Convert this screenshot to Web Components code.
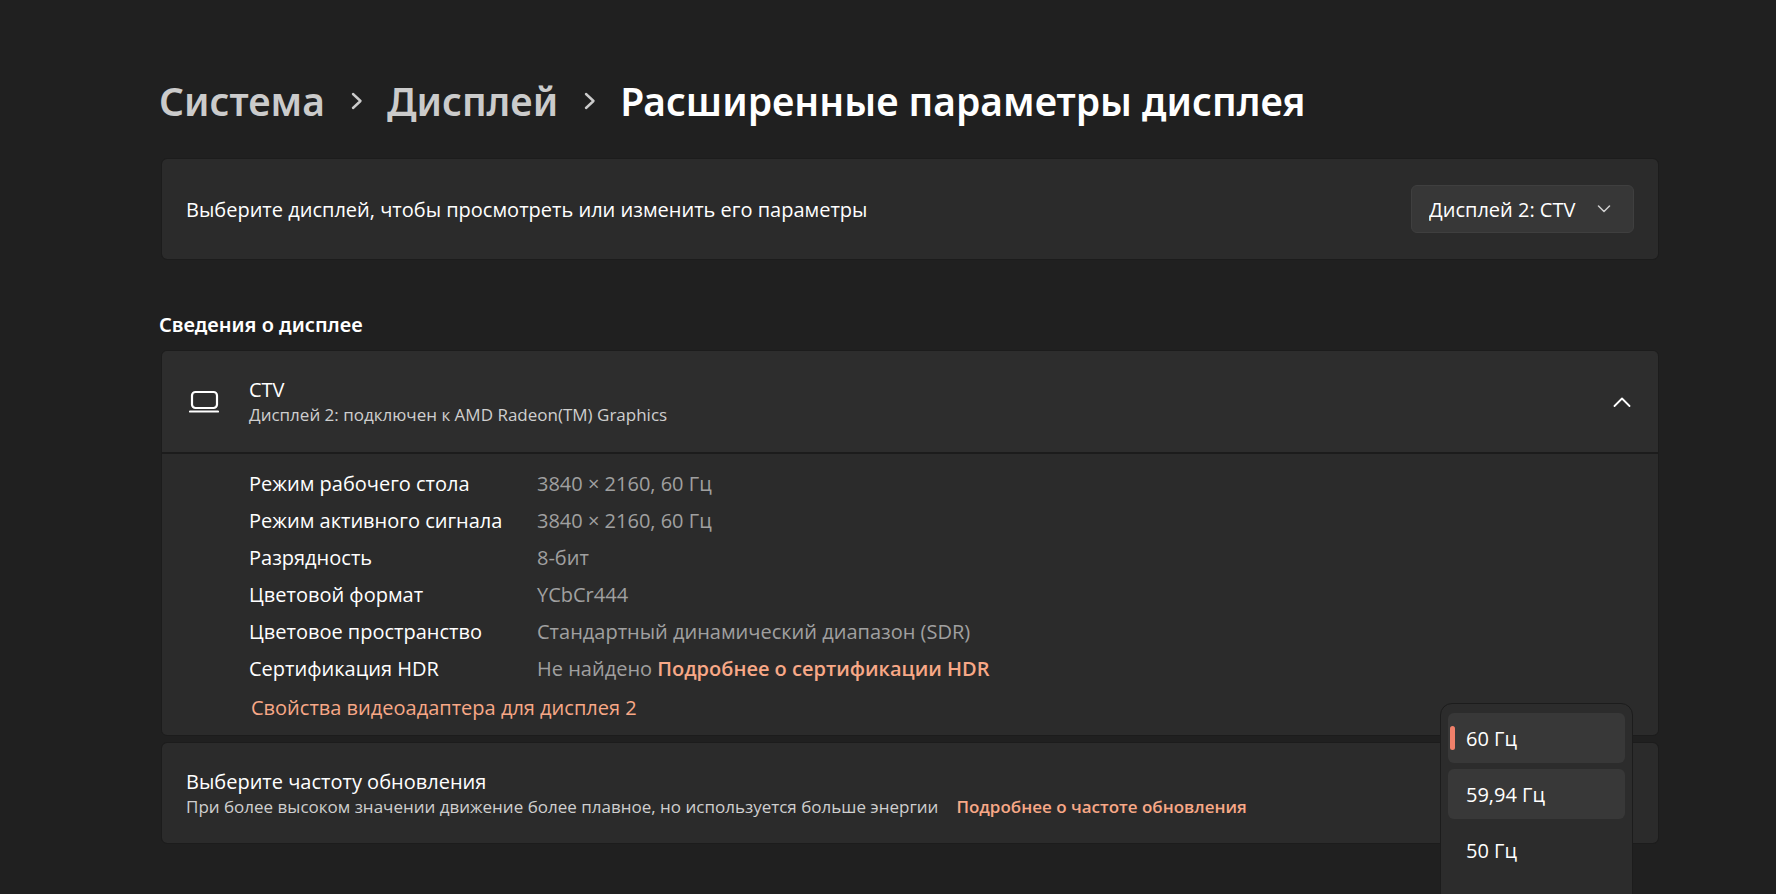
<!DOCTYPE html>
<html lang="ru">
<head>
<meta charset="utf-8">
<meta name="viewport" content="width=device-width, initial-scale=1">
<title>Расширенные параметры дисплея</title>
<style>
  :root {
    --bg: #202020;
    --card: #2b2b2b;
    --card-head: #2d2d2d;
    --edge: #1c1c1c;
    --control: #373737;
    --text: #fff;
    --text-soft: #cfcfcf;
    --text-dim: #a0a0a0;
    --accent: #f8a887;
    --heading: "Noto Sans", "Open Sans", sans-serif;
  }
  body {
    margin: 0;
    background: var(--bg);
    color: var(--text);
    font: 400 20px/27px "Open Sans", "Noto Sans", sans-serif;
  }
</style>
</head>
<body>
<display-settings></display-settings>

<template id="t-page">
  <style>
    :host { display: block; box-sizing: border-box; height: 100vh; overflow: hidden; padding: 74px 117px 0 159px; }
    h2 { margin: 51px 0 12px; font: inherit; font-family: var(--heading); font-weight: 600; }
    .cards { display: grid; gap: 6px; margin-left: 2px; }
    a { color: var(--accent); text-decoration: none; }
    a.strong { font-weight: 600; }
    a.more { margin-left: 18px; }
  </style>
  <bread-crumbs></bread-crumbs>
  <main>
    <div class="cards">
      <setting-card>
        <label slot="title" id="display-label">Выберите дисплей, чтобы просмотреть или изменить его параметры</label>
        <drop-down slot="control" label="Выберите дисплей, чтобы просмотреть или изменить его параметры" value="Дисплей 2: CTV"></drop-down>
      </setting-card>
    </div>
    <h2>Сведения о дисплее</h2>
    <div class="cards">
      <setting-expander>
        <span slot="title">CTV</span>
        <span slot="note">Дисплей 2: подключен к AMD Radeon(TM) Graphics</span>
        <info-row><span slot="name">Режим рабочего стола</span>3840 × 2160, 60 Гц</info-row>
        <info-row><span slot="name">Режим активного сигнала</span>3840 × 2160, 60 Гц</info-row>
        <info-row><span slot="name">Разрядность</span>8-бит</info-row>
        <info-row><span slot="name">Цветовой формат</span>YCbCr444</info-row>
        <info-row><span slot="name">Цветовое пространство</span>Стандартный динамический диапазон (SDR)</info-row>
        <info-row><span slot="name">Сертификация HDR</span>Не найдено <a class="strong" href="#hdr">Подробнее о сертификации HDR</a></info-row>
        <a slot="link" href="#adapter">Свойства видеоадаптера для дисплея 2</a>
      </setting-expander>
      <setting-card>
        <span slot="title">Выберите частоту обновления</span>
        <span slot="note">При более высоком значении движение более плавное, но используется больше энергии<a class="strong more" href="#rate">Подробнее о частоте обновления</a></span>
        <rate-menu slot="popup"></rate-menu>
      </setting-card>
    </div>
  </main>
</template>

<template id="t-crumbs">
  <style>
    :host { display: block; margin-bottom: 30px; }
    ol { display: flex; flex-wrap: wrap; align-items: center; margin: 0; padding: 0; list-style: none; font-family: var(--heading); font-size: 39px; line-height: 54px; font-weight: 600; }
    li { display: flex; align-items: center; }
    a { color: #cbcbcb; text-decoration: none; }
    h1 { margin: 0; font: inherit; }
    svg { width: 12px; height: 18px; margin: 0 24px 0 26px; fill: none; stroke: #cbcbcb; stroke-width: 2.4; stroke-linecap: round; stroke-linejoin: round; }
  </style>
  <nav aria-label="Путь">
    <ol>
      <li><a href="#system">Система</a><svg viewBox="0 0 12 18" aria-hidden="true"><path d="M2 2l7.5 7L2 16"/></svg></li>
      <li><a href="#display">Дисплей</a><svg viewBox="0 0 12 18" aria-hidden="true"><path d="M2 2l7.5 7L2 16"/></svg></li>
      <li><h1>Расширенные параметры дисплея</h1></li>
    </ol>
  </nav>
</template>

<template id="t-card">
  <style>
    :host { display: flex; align-items: center; justify-content: space-between; gap: 24px; position: relative; box-sizing: border-box; min-height: 102px; padding: 16px 24px; background: var(--card); border: 1px solid var(--edge); border-radius: 6px; background-clip: padding-box; }
    .text { display: grid; }
    .note { font-size: 17px; line-height: 24px; color: var(--text-soft); }
  </style>
  <div class="text"><slot name="title"></slot><div class="note"><slot name="note"></slot></div></div>
  <slot name="control"></slot>
  <slot name="popup"></slot>
</template>

<template id="t-drop">
  <style>
    :host { display: block; position: relative; }
    select { appearance: none; display: block; height: 48px; margin: 0; padding: 0 57px 0 17px; font: inherit; color: inherit; background: var(--control); border: 1px solid #3f3f3f; border-radius: 6px; }
    svg { position: absolute; right: 23px; top: 50%; width: 14px; height: 8px; margin-top: -4px; pointer-events: none; fill: none; stroke: #cfcfcf; stroke-width: 1.5; stroke-linecap: round; stroke-linejoin: round; }
  </style>
  <select></select>
  <svg viewBox="0 0 14 8" aria-hidden="true"><path d="M1.5 1l5.5 5.5L12.5 1"/></svg>
</template>

<template id="t-expander">
  <style>
    :host { display: block; border: 1px solid var(--edge); border-radius: 6px; overflow: hidden; }
    button { display: flex; align-items: center; width: 100%; box-sizing: border-box; min-height: 101px; margin: 0; padding: 16px 27px; border: 0; background: var(--card-head); color: inherit; font: inherit; text-align: left; }
    .icon { width: 30px; height: 30px; margin-right: 30px; fill: none; stroke: #fff; stroke-width: 2.2; stroke-linecap: round; }
    .text { flex: 1; display: grid; }
    .note { font-size: 17px; line-height: 24px; color: var(--text-soft); }
    .chev { width: 18px; height: 10px; fill: none; stroke: #fff; stroke-width: 1.8; stroke-linecap: round; stroke-linejoin: round; }
    .body { padding: 11px 24px 6px 87px; background: var(--card); border-top: 2px solid var(--edge); }
    .link { padding-left: 2px; line-height: 42px; }
  </style>
  <button type="button" aria-expanded="true" aria-controls="body">
    <svg class="icon" viewBox="0 0 30 30" aria-hidden="true"><rect x="3" y="5" width="25" height="16" rx="3.5"/><path d="M1 24.500h28"/></svg>
    <span class="text"><slot name="title"></slot><span class="note"><slot name="note"></slot></span></span>
    <svg class="chev" viewBox="0 0 18 10" aria-hidden="true"><path d="M1.5 9L9 1.5 16.5 9"/></svg>
  </button>
  <div class="body" id="body">
    <slot></slot>
    <div class="link"><slot name="link"></slot></div>
  </div>
</template>

<template id="t-row">
  <style>
    :host { display: grid; grid-template-columns: 288px 1fr; line-height: 37px; }
    .value { color: var(--text-dim); }
  </style>
  <div><slot name="name"></slot></div>
  <div class="value"><slot></slot></div>
</template>

<template id="t-menu">
  <style>
    :host { position: absolute; z-index: 1; right: 25px; top: -40px; width: 193px; height: 240px; box-sizing: border-box; padding: 9px 7px; background: #2c2c2c; border: 1px solid var(--edge); border-radius: 12px; display: grid; align-content: start; gap: 6px; }
    button { display: flex; align-items: center; position: relative; height: 50px; margin: 0; padding: 0 18px; border: 0; border-radius: 6px; background: none; color: inherit; font: inherit; text-align: left; }
    button[aria-selected="true"], button.hover { background: #383838; }
    button[aria-selected="true"]::before { content: ""; position: absolute; left: 2px; top: 13px; bottom: 13px; width: 5px; border-radius: 3px; background: #f0806a; }
  </style>
  <button type="button" role="option" aria-selected="true">60 Гц</button>
  <button type="button" role="option" aria-selected="false" class="hover">59,94 Гц</button>
  <button type="button" role="option" aria-selected="false">50 Гц</button>
</template>

<script>
  class Stamped extends HTMLElement {
    constructor() {
      super();
      this.attachShadow({ mode: 'open' })
        .append(document.getElementById(this.constructor.template).content.cloneNode(true));
    }
  }
  customElements.define('bread-crumbs', class extends Stamped { static template = 't-crumbs'; });
  customElements.define('setting-card', class extends Stamped { static template = 't-card'; });
  customElements.define('info-row', class extends Stamped { static template = 't-row'; });
  customElements.define('drop-down', class extends Stamped {
    static template = 't-drop';
    connectedCallback() {
      const select = this.shadowRoot.querySelector('select');
      select.setAttribute('aria-label', this.getAttribute('label'));
      select.replaceChildren(new Option(this.getAttribute('value')));
    }
    focus() { this.shadowRoot.querySelector('select').focus(); }
  });
  customElements.define('setting-expander', class extends Stamped {
    static template = 't-expander';
    connectedCallback() {
      const button = this.shadowRoot.querySelector('button');
      const body = this.shadowRoot.querySelector('.body');
      button.onclick = () => {
        body.hidden = !body.hidden;
        button.setAttribute('aria-expanded', String(!body.hidden));
      };
    }
  });
  customElements.define('rate-menu', class extends Stamped {
    static template = 't-menu';
    connectedCallback() {
      this.setAttribute('role', 'listbox');
      this.setAttribute('aria-label', 'Выберите частоту обновления');
    }
  });
  customElements.define('display-settings', class extends Stamped {
    static template = 't-page';
    connectedCallback() {
      const root = this.shadowRoot;
      root.getElementById('display-label').onclick = () => root.querySelector('drop-down').focus();
    }
  });
</script>
</body>
</html>
